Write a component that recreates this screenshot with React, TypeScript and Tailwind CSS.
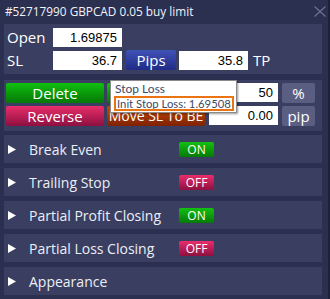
import React from 'react';

const ui = { fontFamily: '"Open Sans", "Noto Sans", sans-serif' };
const num = { fontFamily: '"Liberation Sans", Arial, sans-serif' };
const tip = { fontFamily: 'Lato, "Liberation Sans", sans-serif' };

function Field({ value }: { value: string }) {
  return (
    <div className="w-[69px] h-[19px] bg-white text-black text-[13px] text-right pr-[5px] leading-[19px]" style={num}>
      {value}
    </div>
  );
}

function Toggle({ on }: { on: boolean }) {
  return on ? (
    <div className="w-[35px] h-[15px] rounded-[2px] bg-gradient-to-b from-[#12c012] to-[#067a06] text-white text-[12px] leading-[15px] text-center">
      ON
    </div>
  ) : (
    <div className="w-[35px] h-[15px] rounded-[2px] bg-gradient-to-b from-[#ea2e6c] to-[#8e1040] text-white text-[12px] leading-[15px] text-center">
      OFF
    </div>
  );
}

function Section({ title, on }: { title: string; on?: boolean }) {
  return (
    <div className="h-[28px] bg-[#3a3f62] flex items-center pl-[4px]">
      <svg width="9" height="9" viewBox="0 0 9 9" className="shrink-0">
        <path d="M0 0 L8 4.5 L0 9 Z" fill="#ffffff" />
      </svg>
      <span className="ml-[12px] w-[150px] text-[14px] text-[#eceef5]">{title}</span>
      {on !== undefined && <Toggle on={on} />}
    </div>
  );
}

export default function App() {
  return (
    <div className="relative w-[330px] h-[299px] bg-[#2b3050] flex overflow-hidden" style={ui}>
      <div className="w-[328px] pl-[4px] pr-[6px] flex flex-col">
        <div className="h-[24px] flex items-center justify-between pl-[1px] -mr-[4px]">
          <span className="text-[11.8px] text-[#f2f3f8] whitespace-nowrap">#52717990 GBPCAD 0.05 buy limit</span>
          <svg width="12" height="11" viewBox="0 0 12 11" className="mb-[2px]">
            <path d="M0.5 0.5 L11.5 10.5 M11.5 0.5 L0.5 10.5" stroke="#6c7190" strokeWidth="1.2" />
          </svg>
        </div>

        <div className="h-[50px] bg-[#3a3f62] pl-[3px] pt-[3px] flex flex-col gap-[3px] text-white">
          <div className="h-[20px] flex items-center">
            <span className="w-[46px] text-[15px]">Open</span>
            <Field value="1.69875" />
          </div>
          <div className="h-[20px] flex items-center">
            <span className="w-[46px] text-[15px]">SL</span>
            <Field value="36.7" />
            <div className="ml-[4px] w-[50px] h-[20px] rounded-[2px] bg-gradient-to-b from-[#4152b8] to-[#1f2b86] text-[15px] leading-[20px] text-center">
              Pips
            </div>
            <div className="ml-[3px]">
              <Field value="35.8" />
            </div>
            <span className="ml-[5px] text-[15px]">TP</span>
          </div>
        </div>

        <div className="mt-[6px] h-[51px] bg-[#3a3f62] pl-[2px] pt-[3px] grid grid-cols-[98px_98px_69px_35px] grid-rows-[20px_20px] gap-x-[3px] gap-y-[3px] text-white text-[15px]">
          <div className="rounded-[2px] bg-gradient-to-b from-[#10c010] to-[#067806] text-center leading-[20px]">Delete</div>
          <div className="rounded-[2px] bg-gradient-to-b from-[#10c010] to-[#067806] text-center leading-[20px]">Close</div>
          <div className="ml-[1px]"><Field value="50" /></div>
          <div className="ml-[2px] rounded-[2px] bg-[#5a5e82] text-center leading-[20px]">%</div>
          <div className="rounded-[2px] bg-gradient-to-b from-[#ea2e6c] to-[#8e1040] text-center leading-[20px]">Reverse</div>
          <div className="rounded-[2px] bg-gradient-to-b from-[#c84a08] to-[#7e2204] text-center leading-[19px] text-[14px] whitespace-nowrap">Move SL To BE</div>
          <div className="ml-[1px]"><Field value="0.00" /></div>
          <div className="ml-[2px] rounded-[2px] bg-[#5a5e82] text-center leading-[20px]">pip</div>
        </div>

        <div className="mt-[4px] flex flex-col gap-[5px]">
          <Section title="Break Even" on={true} />
          <Section title="Trailing Stop" on={false} />
          <Section title="Partial Profit Closing" on={true} />
          <Section title="Partial Loss Closing" on={false} />
          <Section title="Appearance" />
        </div>
      </div>
      <div className="w-[2px] bg-[#1d2139]" />

      <div
        className="absolute left-[110px] top-[80px] w-[127px] h-[33px] bg-white border border-[#8a8a8a] shadow-[1px_1px_2px_rgba(0,0,0,0.4)] text-[11.3px] text-[#3d4a68] leading-[14px] whitespace-nowrap"
        style={tip}
      >
        <div className="pl-[4px] pt-[1px] text-[12px]">Stop Loss</div>
        <div className="ml-[3px] w-[120px] h-[15px] border-2 border-[#ea7414] pl-[1px] leading-[11px] overflow-hidden">
          Init Stop Loss: 1.69508
        </div>
      </div>
    </div>
  );
}
